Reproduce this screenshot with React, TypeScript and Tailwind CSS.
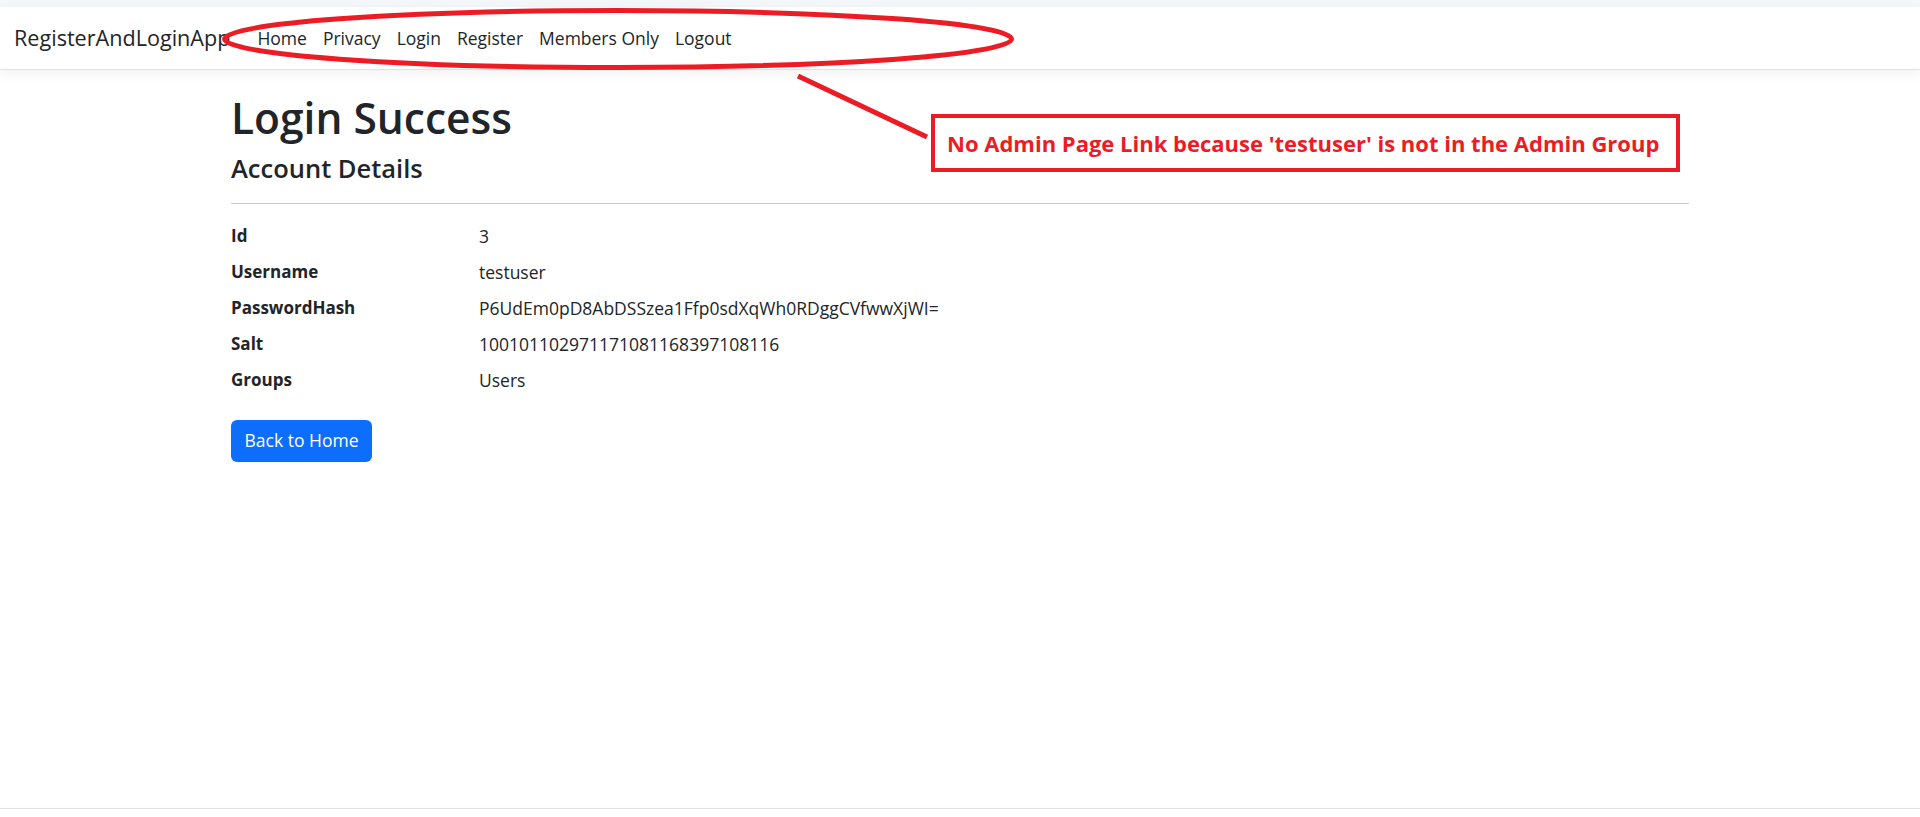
const links = ['Home', 'Privacy', 'Login', 'Register', 'Members Only', 'Logout'];

const details = [
	{ label: 'Id', value: '3' },
	{ label: 'Username', value: 'testuser' },
	{ label: 'PasswordHash', value: 'P6UdEm0pD8AbDSSzea1Ffp0sdXqWh0RDggCVfwwXjWI=' },
	{ label: 'Salt', value: '100101102971171081168397108116' },
	{ label: 'Groups', value: 'Users' },
];

const Annotation = () => (
	<>
		<svg className="absolute top-0 left-0 pointer-events-none" width="1920" height="817">
			<ellipse cx="618" cy="39" rx="393.5" ry="28.5" fill="none" stroke="#ec1c24" strokeWidth="5" />
			<line x1="798" y1="76" x2="927" y2="137" stroke="#ec1c24" strokeWidth="5" />
		</svg>
		<div className="absolute left-[931px] top-[114px] w-[749px] h-[58px] border-4 border-[#ec1c24] flex items-center pl-[12px] bg-white">
			<span className="whitespace-nowrap font-bold text-[22px] text-[#ec1c24] font-['Open_Sans',sans-serif]">
				No Admin Page Link because 'testuser' is not in the Admin Group
			</span>
		</div>
	</>
);

const App = () => {
	return (
		<div className="relative h-[817px] overflow-hidden flex flex-col bg-white text-[#212529] font-['Open_Sans',sans-serif]">
			<div className="h-[7px] bg-[#f4f7fa]" />
			<header className="h-[63px] flex items-center pl-[14px] pt-[1px] bg-white border-b border-[#dee2e6] shadow-[0_4px_12px_rgba(0,0,0,0.05)]">
				<span className="text-[21.6px] mr-[19px]">RegisterAndLoginApp</span>
				<nav className="flex">
					{links.map((link) => (
						<a key={link} className="px-[8px] text-[17.5px] cursor-pointer">
							{link}
						</a>
					))}
				</nav>
			</header>
			<main className="flex-1">
				<div className="w-[1458px] mx-auto">
					<h1 className="mt-[22px] text-[42.5px] leading-[1.2] font-semibold">Login Success</h1>
					<h4 className="mt-[10px] text-[25.5px] leading-[1.2] font-semibold">Account Details</h4>
					<hr className="mt-[19px] border-t border-[#c8c9ca]" />
					<dl className="mt-[19px] grid grid-cols-[248px_1fr] text-[17.5px] leading-[26px]">
						{details.map((row) => (
							<div key={row.label} className="contents">
								<dt className="font-bold text-[17px] h-[36px]">{row.label}</dt>
								<dd className="h-[36px]">{row.value}</dd>
							</div>
						))}
					</dl>
					<button className="mt-[17px] w-[141px] h-[42px] rounded-[6px] bg-[#0d6efd] text-white text-[17.5px] flex items-center justify-center">
						Back to Home
					</button>
				</div>
			</main>
			<footer className="h-[9px] border-t border-[#dee2e6]" />
			<Annotation />
		</div>
	);
};

export default App;
